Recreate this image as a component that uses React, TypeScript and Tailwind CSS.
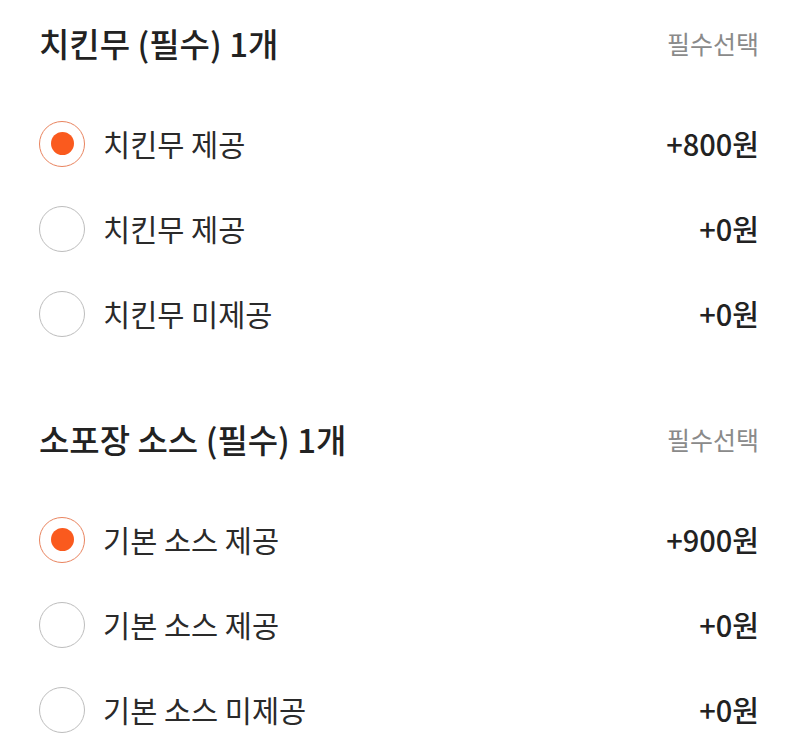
type Option = { label: string; price: string; selected?: boolean };

type Group = { title: string; note: string; options: Option[] };

const groups: Group[] = [
  {
    title: '치킨무 (필수) 1개',
    note: '필수선택',
    options: [
      { label: '치킨무 제공', price: '+800원', selected: true },
      { label: '치킨무 제공', price: '+0원' },
      { label: '치킨무 미제공', price: '+0원' },
    ],
  },
  {
    title: '소포장 소스 (필수) 1개',
    note: '필수선택',
    options: [
      { label: '기본 소스 제공', price: '+900원', selected: true },
      { label: '기본 소스 제공', price: '+0원' },
      { label: '기본 소스 미제공', price: '+0원' },
    ],
  },
];

function Radio({ selected }: { selected?: boolean }) {
  if (selected) {
    return (
      <span className="flex h-[46px] w-[46px] shrink-0 items-center justify-center rounded-full border-[1.5px] border-[#e9845f]">
        <span className="h-[23px] w-[23px] rounded-full bg-[#fa5a1e]" />
      </span>
    );
  }
  return <span className="h-[46px] w-[46px] shrink-0 rounded-full border-[1.5px] border-[#bdbdbd]" />;
}

function App() {
  return (
    <div
      className="min-h-screen bg-white pl-[39px] pr-[41px]"
      style={{ fontFamily: '"Noto Sans CJK KR", "Noto Sans", sans-serif' }}
    >
      {groups.map((group, gi) => (
        <section key={gi} className={gi > 0 ? 'mt-[40px]' : ''}>
          {/* Header */}
          <div className="flex h-[86px] items-center justify-between">
            <h2 className="text-[33px] font-medium leading-none text-[#222]">{group.title}</h2>
            <span className="text-[25px] leading-none text-[#8a8a8a]">{group.note}</span>
          </div>

          {/* Options */}
          <ul className="pt-[15px]">
            {group.options.map((opt, oi) => (
              <li key={oi} className="flex h-[85px] items-center">
                <Radio selected={opt.selected} />
                <span className="ml-[18px] flex-1 text-[29.5px] leading-none text-[#2a2a2a]">{opt.label}</span>
                <span className="text-[29px] font-medium leading-none text-[#222]">{opt.price}</span>
              </li>
            ))}
          </ul>
        </section>
      ))}
    </div>
  );
}

export default App;
